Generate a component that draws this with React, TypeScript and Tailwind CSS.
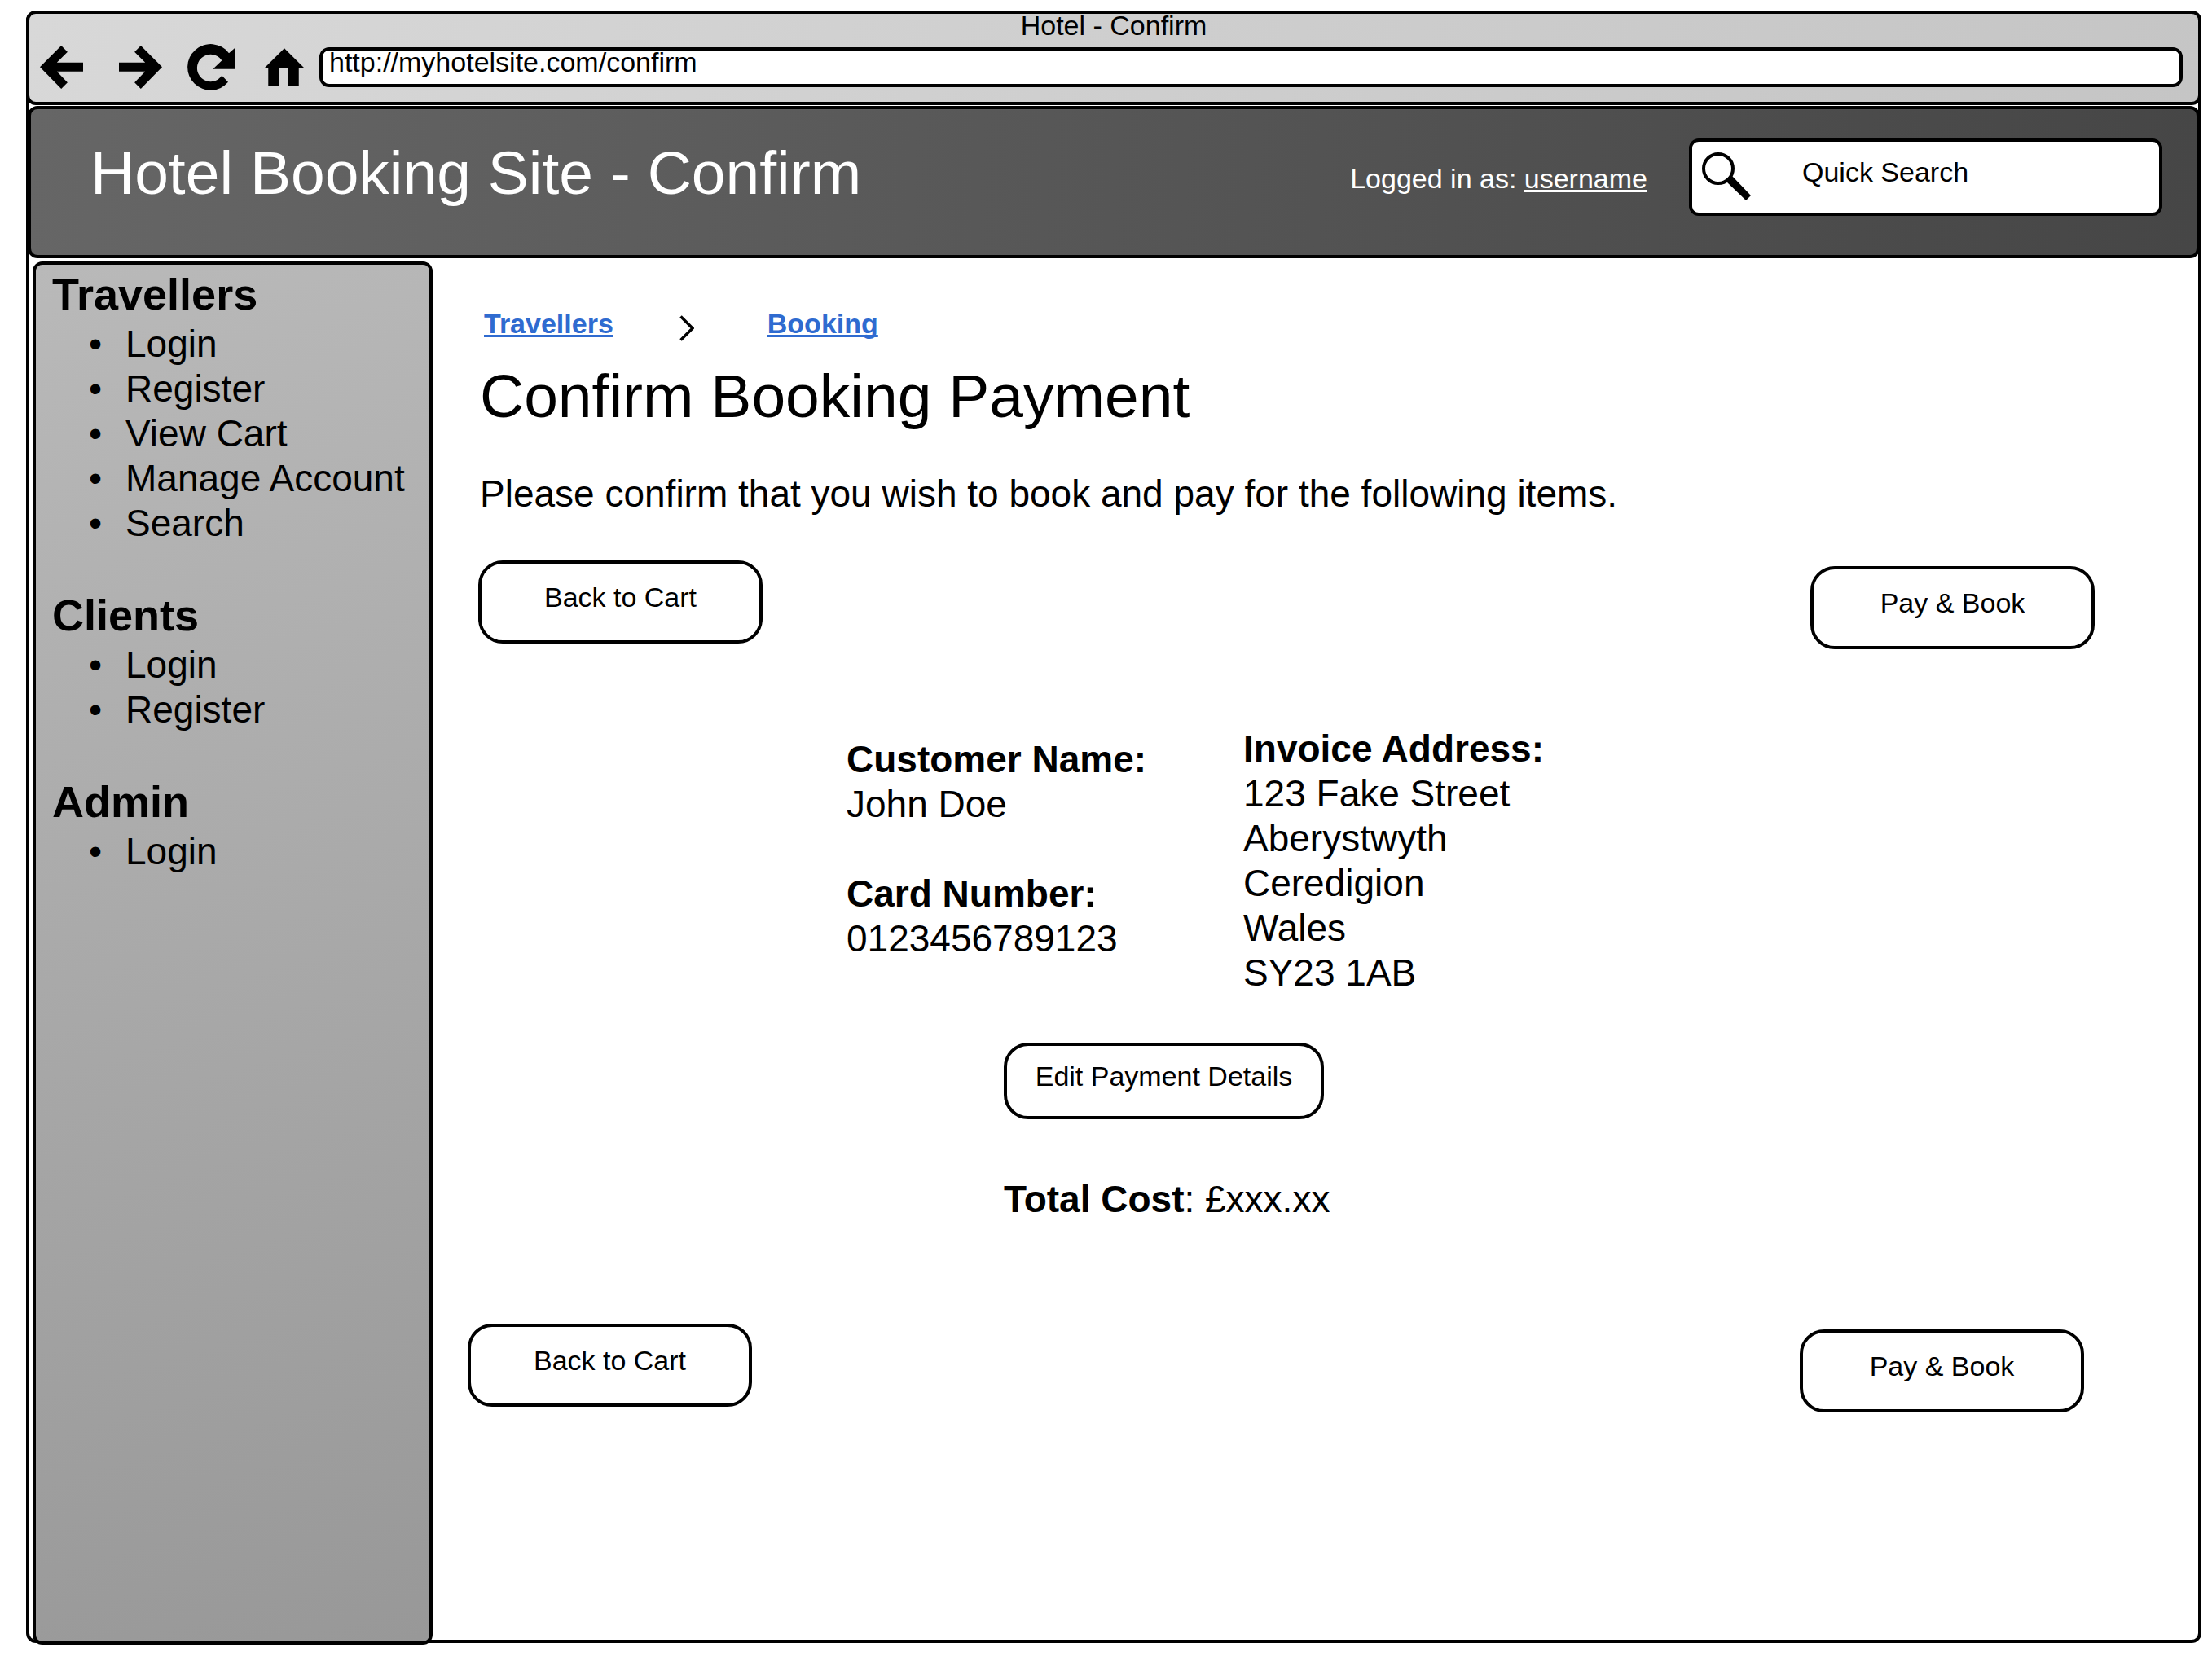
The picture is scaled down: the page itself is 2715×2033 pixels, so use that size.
import React from "react";

const ArrowIcon = ({ flipped = false }: { flipped?: boolean }) => (
  <svg viewBox="0 0 158 158" className="block size-[53px]" aria-hidden="true">
    <path
      transform={flipped ? "matrix(-1 0 0 1 158 0)" : undefined}
      d="M0 78 78 0l23 23-39 39h96v33H62l39 40-23 23z"
    />
  </svg>
);

const ReloadIcon = () => (
  <svg viewBox="0 0 177 170" className="block h-[57px] w-[59px]" aria-hidden="true">
    <path d="M150 140A85 85 0 1 1 153 33L177 12V92H94L127 60A50 50 0 1 0 127 116z" />
  </svg>
);

const HomeIcon = () => (
  <svg viewBox="0 0 146 141" className="block h-[47px] w-[48px]" aria-hidden="true">
    <path d="M73 0 146 72H127V141H87V72H53V141H13V72H0z" />
  </svg>
);

const SearchIcon = () => (
  <svg viewBox="0 0 60 59" className="mt-[13px] block h-[59px] w-[60px] shrink-0" aria-hidden="true">
    <circle cx="20" cy="20" r="18" fill="none" stroke="black" strokeWidth="4" />
    <path d="M30 36 37 29 60 53 54 59z" />
  </svg>
);

const ChevronIcon = () => (
  <svg viewBox="0 0 18 32" className="mt-[10px] mr-[90px] ml-[81px] block h-8 w-[18px]" aria-hidden="true">
    <path d="M1.5 1.5 16 16 1.5 30.5" fill="none" stroke="black" strokeWidth="3.5" />
  </svg>
);

const menu = [
  { title: "Travellers", items: ["Login", "Register", "View Cart", "Manage Account", "Search"] },
  { title: "Clients", items: ["Login", "Register"] },
  { title: "Admin", items: ["Login"] },
];

const WideButton = ({ children }: { children: React.ReactNode }) => (
  <button
    type="button"
    className="flex h-[102px] w-[349px] items-center justify-center rounded-[30px] border-4 border-black bg-white pb-3"
  >
    {children}
  </button>
);

const Actions = () => (
  <>
    <WideButton>Back to Cart</WideButton>
    <div className="mt-[7px]">
      <WideButton>Pay &amp; Book</WideButton>
    </div>
  </>
);

export default function App() {
  return (
    <div className="flex min-h-screen flex-col bg-white pt-[13px] pr-[13px] pb-4 pl-8 font-['Liberation_Sans',Arial,sans-serif] text-[34px] leading-10 text-black">
      <div className="flex flex-1 flex-col rounded-[12px] border-4 border-black">
        <div className="-mx-1 -mt-1 h-[116px] rounded-[12px] border-4 border-black bg-linear-[115deg,#d8d8d8,#c5c5c5]">
          <div className="text-center leading-7">Hotel - Confirm</div>
          <div className="mt-[9px] flex items-center pr-[19px] pl-[13px]">
            <button type="button" aria-label="Back">
              <ArrowIcon />
            </button>
            <button type="button" aria-label="Forward" className="ml-11">
              <ArrowIcon flipped />
            </button>
            <button type="button" aria-label="Reload" className="ml-[31px]">
              <ReloadIcon />
            </button>
            <button type="button" aria-label="Home" className="ml-9">
              <HomeIcon />
            </button>
            <div className="ml-[19px] flex h-[49px] flex-1 items-start rounded-[12px] border-4 border-black bg-white">
              <input
                type="text"
                aria-label="Address"
                defaultValue="http://myhotelsite.com/confirm"
                className="-mt-[6px] h-10 w-full bg-transparent px-2 leading-10 outline-none"
              />
            </div>
          </div>
        </div>

        <header className="-mx-[2px] mt-px flex h-[187px] items-start rounded-[12px] border-4 border-black bg-linear-[94deg,#666666,#464646] pr-[42px] pl-[73px] text-white">
          <div className="mt-[33px] flex-1 text-[75px] leading-[90px]">Hotel Booking Site - Confirm</div>
          <div className="mt-[65px] mr-[51px]">
            Logged in as:{" "}
            <a href="#" className="underline decoration-[3px] underline-offset-2 [text-decoration-skip-ink:none]">
              username
            </a>
          </div>
          <div className="mt-9 flex h-[95px] w-[581px] items-start rounded-[12px] border-4 border-black bg-white pl-3 text-black">
            <SearchIcon />
            <input
              type="search"
              aria-label="Quick Search"
              placeholder="Quick Search"
              className="mt-[17px] ml-[63px] h-10 min-w-0 flex-1 bg-transparent leading-10 outline-none placeholder:text-black"
            />
          </div>
        </header>

        <div className="flex flex-1 items-stretch">
          <aside className="-mb-[6px] mt-1 ml-1 w-[491px] shrink-0 rounded-[12px] border-4 border-black bg-linear-[164deg,#b9b9b9,#989898] pt-[3px] pl-5">
            <nav className="flex flex-col gap-[52px]">
              {menu.map((group) => (
                <section key={group.title}>
                  <h2 className="text-[54px] leading-[67px] font-bold">{group.title}</h2>
                  <ul className="pl-[45px] text-[46px] leading-[55px]">
                    {group.items.map((item) => (
                      <li key={item} className="flex whitespace-nowrap">
                        <span className="w-[45px]">•</span>
                        <a href="#">{item}</a>
                      </li>
                    ))}
                  </ul>
                </section>
              ))}
            </nav>
          </aside>

          <main className="flex-1 pt-[60px]">
            <nav aria-label="Breadcrumb" className="flex items-start pl-[63px] font-bold text-[#2f6bd0]">
              <a href="#" className="underline decoration-[3px] underline-offset-2 [text-decoration-skip-ink:none]">
                Travellers
              </a>
              <ChevronIcon />
              <a href="#" className="underline decoration-[3px] underline-offset-2 [text-decoration-skip-ink:none]">
                Booking
              </a>
            </nav>
            <h1 className="mt-[22px] pl-[58px] text-[75px] leading-[90px]">Confirm Booking Payment</h1>
            <p className="mt-12 pl-[58px] text-[46px] leading-[55px]">
              Please confirm that you wish to book and pay for the following items.
            </p>
            <div className="mt-[54px] flex items-start justify-between pr-[127px] pl-14">
              <Actions />
            </div>

            <div className="mt-[95px] flex items-start pl-[508px] text-[46px] leading-[55px]">
              <dl className="mt-[13px] w-[487px]">
                <dt className="font-bold">Customer Name:</dt>
                <dd className="mb-[55px]">John Doe</dd>
                <dt className="font-bold">Card Number:</dt>
                <dd>0123456789123</dd>
              </dl>
              <dl>
                <dt className="font-bold">Invoice Address:</dt>
                <dd>
                  123 Fake Street
                  <br />
                  Aberystwyth
                  <br />
                  Ceredigion
                  <br />
                  Wales
                  <br />
                  SY23 1AB
                </dd>
              </dl>
            </div>

            <div className="mt-[58px] pl-[701px]">
              <button
                type="button"
                className="flex h-[94px] w-[393px] items-center justify-center rounded-[30px] border-4 border-black bg-white pb-3"
              >
                Edit Payment Details
              </button>
              <p className="mt-[71px] text-[46px] leading-[55px]">
                <b>Total Cost</b>: £xxx.xx
              </p>
            </div>

            <div className="mt-[125px] flex items-start justify-between pr-[140px] pl-[43px]">
              <Actions />
            </div>
          </main>
        </div>
      </div>
    </div>
  );
}
